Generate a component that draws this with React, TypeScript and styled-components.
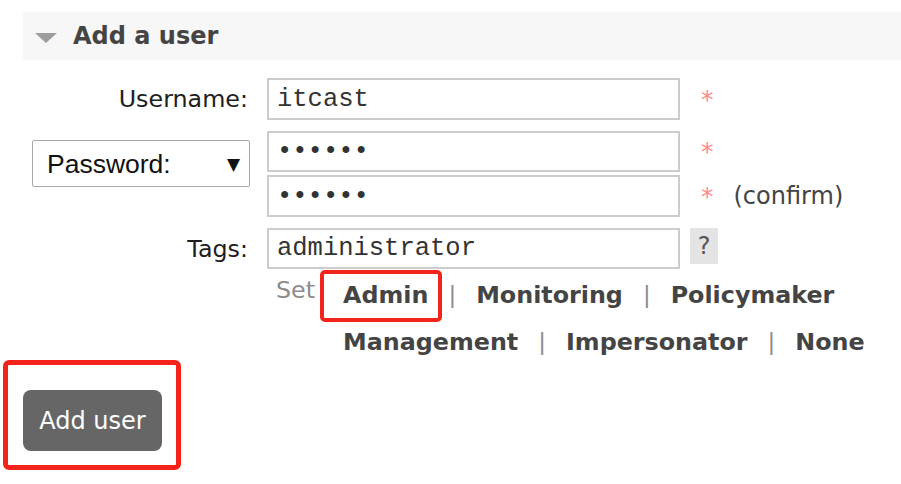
import React from "react";
import styled, { createGlobalStyle } from "styled-components";

const Global = createGlobalStyle`
  html, body { margin: 0; padding: 0; background: #fff; }
  body { font-family: "DejaVu Sans", Verdana, sans-serif; color: #222; }
  * { box-sizing: border-box; }
`;

const Page = styled.div`
  width: 901px;
  min-height: 484px;
  padding: 12px 0 34px 23px;
`;

const SectionHeader = styled.div`
  height: 48px;
  background: #f7f7f7;
  display: flex;
  align-items: center;
  gap: 16px;
  padding-left: 12px;
`;

const Caret = styled.span`
  width: 0;
  height: 0;
  margin-top: 4px;
  border-left: 11px solid transparent;
  border-right: 11px solid transparent;
  border-top: 10px solid #9d9d9d;
`;

const Title = styled.h2`
  margin: 0;
  font-size: 24px;
  font-weight: bold;
  color: #444;
`;

const Form = styled.form`
  margin-top: 18px;
  display: flex;
  flex-direction: column;
`;

const Row = styled.div<{ $top: number; $align?: string }>`
  display: flex;
  align-items: ${(p) => p.$align || "center"};
  margin-top: ${(p) => p.$top}px;
`;

const LabelCell = styled.label<{ $pad?: number }>`
  flex: 0 0 227px;
  display: flex;
  justify-content: flex-end;
  padding-right: ${(p) => (p.$pad ?? 2)}px;
  font-size: 23.8px;
  color: #1e1e1e;
`;

const FieldCell = styled.div`
  flex: 0 0 413px;
  margin-left: 17px;
  display: flex;
  flex-direction: column;
  gap: 3px;
`;

const TextInput = styled.input<{ $h?: number }>`
  width: 413px;
  height: ${(p) => p.$h || 42}px;
  border: 2px solid #cccccc;
  padding: 0 8px;
  font-family: "Liberation Mono", "Courier New", monospace;
  font-size: 25.5px;
  color: #333;
  background: #fff;
  outline: none;
`;

const ExtraCell = styled.div`
  margin-left: 21px;
  display: flex;
  flex-direction: column;
  gap: 3px;
`;

const ExtraLine = styled.div<{ $h: number }>`
  height: ${(p) => p.$h}px;
  display: flex;
  align-items: center;
  gap: 20px;
  font-size: 24px;
`;

const Required = styled.span`
  color: #ff8a8a;
  font-size: 25px;
`;

const Note = styled.span`
  color: #444;
  font-size: 24px;
`;

const SelectWrap = styled.div`
  position: relative;
  margin-top: 9px;
  width: 218px;
  height: 47px;
`;

const Select = styled.select`
  appearance: none;
  width: 100%;
  height: 100%;
  border: 1px solid #a9a9a9;
  border-radius: 2px;
  background: #fff;
  padding: 0 0 0 14px;
  font-family: "Liberation Sans", Arial, sans-serif;
  font-size: 26.5px;
  color: #111;
  outline: none;
`;

const SelectArrow = styled.span`
  position: absolute;
  right: 10px;
  top: 50%;
  transform: translateY(-50%);
  font-family: "DejaVu Sans", sans-serif;
  font-size: 17px;
  color: #111;
  pointer-events: none;
`;

const HelpButton = styled.span`
  margin-left: 10px;
  align-self: flex-start;
  width: 28px;
  height: 36px;
  background: #e4e4e4;
  color: #555;
  font-size: 24px;
  display: flex;
  align-items: center;
  justify-content: center;
`;

const TagLinks = styled.div`
  margin-left: 253px;
  margin-top: 3px;
  display: flex;
  align-items: flex-start;
  gap: 28px;
`;

const SetWord = styled.span`
  color: #8c8c8c;
  font-size: 23.8px;
  line-height: 36px;
`;

const LinkLines = styled.div`
  display: flex;
  flex-direction: column;
`;

const LinkLine = styled.div`
  display: flex;
  align-items: stretch;
  height: 47px;
`;

const TagLink = styled.span<{ $marked?: boolean }>`
  position: relative;
  line-height: 47px;
  font-size: 23.8px;
  font-weight: bold;
  color: #444;
  cursor: pointer;
  &::after {
    content: "";
    display: ${(p) => (p.$marked ? "block" : "none")};
    position: absolute;
    top: -2px;
    bottom: -3px;
    left: -23px;
    right: -14px;
    border: 4px solid #f5241b;
    border-radius: 5px;
  }
`;

const Sep = styled.span`
  line-height: 47px;
  padding: 0 20px;
  color: #8c8c8c;
  font-size: 23px;
`;

const ButtonArea = styled.div`
  margin-top: 24px;
  display: flex;
`;

const Marked = styled.div`
  position: relative;
  &::after {
    content: "";
    position: absolute;
    top: -30px;
    bottom: -19px;
    left: -20px;
    right: -19px;
    border: 5px solid #f5241b;
    border-radius: 6px;
    pointer-events: none;
  }
`;

const SubmitButton = styled.button`
  width: 139px;
  height: 61px;
  border: none;
  border-radius: 8px;
  background: #666;
  color: #fff;
  font-family: "DejaVu Sans", Verdana, sans-serif;
  font-size: 24px;
  padding: 0;
  cursor: pointer;
`;

const tagsLine1 = ["Admin", "Monitoring", "Policymaker"];
const tagsLine2 = ["Management", "Impersonator", "None"];

function LinkRow({ items, marked }: { items: string[]; marked?: string }) {
  return (
    <LinkLine>
      {items.map((t, i) => (
        <React.Fragment key={t}>
          {i > 0 && <Sep>|</Sep>}
          <TagLink $marked={t === marked}>{t}</TagLink>
        </React.Fragment>
      ))}
    </LinkLine>
  );
}

export default function App() {
  return (
    <>
      <Global />
      <Page>
        <SectionHeader>
          <Caret />
          <Title>Add a user</Title>
        </SectionHeader>
        <Form onSubmit={(e) => e.preventDefault()}>
          <Row $top={0}>
            <LabelCell>Username:</LabelCell>
            <FieldCell>
              <TextInput type="text" defaultValue="itcast" />
            </FieldCell>
            <ExtraCell>
              <ExtraLine $h={42}>
                <Required>*</Required>
              </ExtraLine>
            </ExtraCell>
          </Row>
          <Row $top={11} $align="flex-start">
            <LabelCell $pad={0}>
              <SelectWrap>
                <Select defaultValue="password">
                  <option value="password">Password:</option>
                  <option value="hash">Password hash:</option>
                </Select>
                <SelectArrow>▼</SelectArrow>
              </SelectWrap>
            </LabelCell>
            <FieldCell>
              <TextInput type="password" defaultValue="123456" $h={41} />
              <TextInput type="password" defaultValue="123456" />
            </FieldCell>
            <ExtraCell>
              <ExtraLine $h={41}>
                <Required>*</Required>
              </ExtraLine>
              <ExtraLine $h={42}>
                <Required>*</Required>
                <Note>(confirm)</Note>
              </ExtraLine>
            </ExtraCell>
          </Row>
          <Row $top={11}>
            <LabelCell>Tags:</LabelCell>
            <FieldCell>
              <TextInput type="text" defaultValue="administrator" $h={41} />
            </FieldCell>
            <HelpButton>?</HelpButton>
          </Row>
          <TagLinks>
            <SetWord>Set</SetWord>
            <LinkLines>
              <LinkRow items={tagsLine1} marked="Admin" />
              <LinkRow items={tagsLine2} />
            </LinkLines>
          </TagLinks>
          <ButtonArea>
            <Marked>
              <SubmitButton type="submit">Add user</SubmitButton>
            </Marked>
          </ButtonArea>
        </Form>
      </Page>
    </>
  );
}
